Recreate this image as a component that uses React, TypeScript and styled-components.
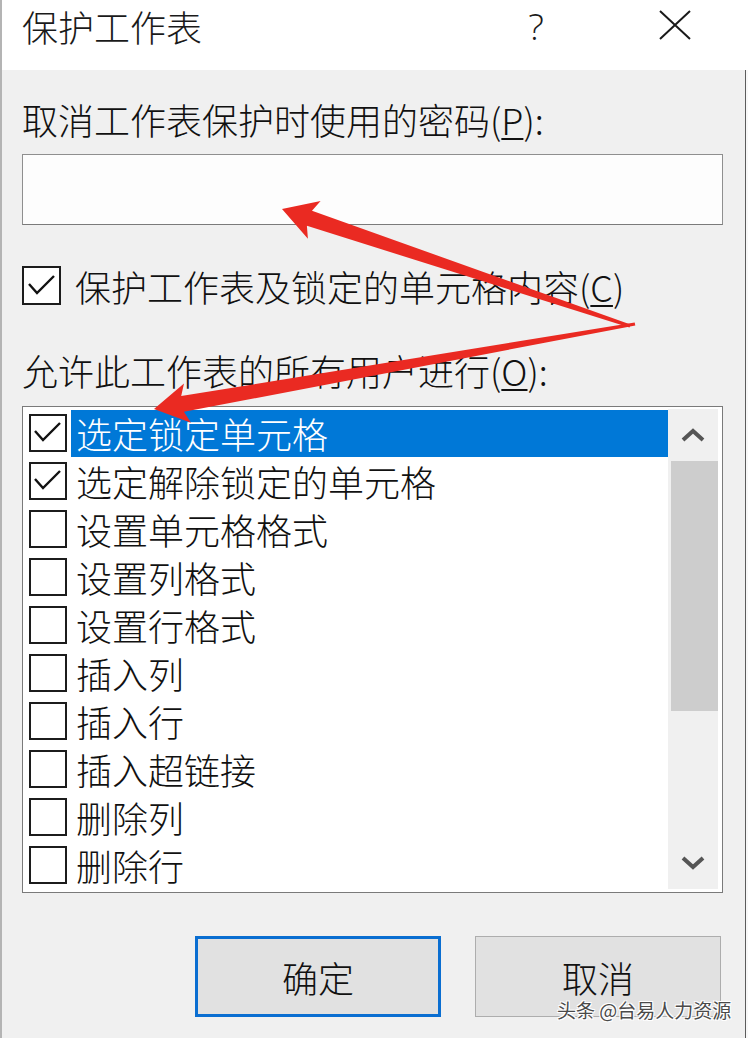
import React from "react";
import styled, { createGlobalStyle, css } from "styled-components";

const GlobalStyle = createGlobalStyle`
  html, body { margin: 0; padding: 0; background: #f0f0f0; }
  body { font-family: "Noto Sans CJK SC", "Noto Sans", sans-serif; }
  * { box-sizing: border-box; }
`;

const Page = styled.div`
  position: relative;
  width: 748px;
  height: 1038px;
  display: flex;
  flex-direction: column;
  border-left: 2px solid #b4b4b4;
  background: #f8f8f8;
  color: #111;
  font-family: "Noto Sans CJK SC", "Noto Sans", sans-serif;
  font-weight: 300;
  overflow: hidden;
`;

const TitleBar = styled.div`
  height: 70px;
  flex: none;
  display: flex;
  align-items: flex-start;
  padding: 7px 38px 0 20px;
  background: #ffffff;
`;

const Title = styled.div`
  font-size: 36px;
  line-height: 38px;
  color: #1a1a1a;
`;

const Controls = styled.div`
  margin-left: auto;
  display: flex;
  gap: 74px;
  margin-top: -3px;
`;

const HelpButton = styled.div`
  width: 60px;
  height: 40px;
  text-align: center;
  font-family: "Open Sans", "Noto Sans", sans-serif;
  font-weight: 300;
  font-size: 37px;
  line-height: 44px;
  color: #1a1a1a;
`;

const CloseButton = styled.div`
  width: 70px;
  height: 40px;
  display: flex;
  justify-content: center;
  padding-top: 6px;
`;

const Body = styled.div`
  flex: 1;
  display: flex;
  flex-direction: column;
  width: 744px;
  padding: 0 23px 0 20px;
  background: #f0f0f0;
  border-right: 1px solid #5c5c5c;
`;

const Label = styled.div<{ $top: number }>`
  margin-top: ${(p) => p.$top}px;
  font-size: 36px;
  line-height: 40px;
  white-space: nowrap;
  color: #111;
  u { text-decoration-thickness: 2px; text-underline-offset: 3px; }
`;

const PasswordInput = styled.div`
  margin-top: 15px;
  width: 701px;
  height: 71px;
  background: #fdfdfd;
  border: 1px solid #8f8f8f;
  border-bottom-color: #7a7a7a;
`;

const CheckRow = styled.div`
  margin-top: 41px;
  display: flex;
  align-items: center;
  height: 39px;
  gap: 14px;
  font-size: 36px;
  line-height: 40px;
  white-space: nowrap;
  u { text-decoration-thickness: 2px; text-underline-offset: 3px; }
`;

const Box = styled.div<{ $size: number }>`
  flex: none;
  width: ${(p) => p.$size}px;
  height: ${(p) => p.$size}px;
  border: 2px solid #1c1c1c;
  background: #ffffff;
  display: flex;
  align-items: center;
  justify-content: center;
`;

const ListBox = styled.div`
  margin-top: 16px;
  width: 701px;
  height: 487px;
  display: flex;
  background: #ffffff;
  border: 1px solid #7a7a7a;
`;

const Rows = styled.div`
  flex: 1;
  display: flex;
  flex-direction: column;
  padding: 2px 0 0 6px;
`;

const Row = styled.div`
  height: 48px;
  display: flex;
  align-items: center;
`;

const ItemText = styled.div<{ $selected?: boolean }>`
  flex: 1;
  height: 47px;
  margin-left: 4px;
  padding-left: 5px;
  font-size: 36px;
  line-height: 47px;
  white-space: nowrap;
  color: #111;
  ${(p) =>
    p.$selected &&
    css`
      background: #0078d7;
      color: #ffffff;
    `}
`;

const ScrollBar = styled.div`
  width: 50px;
  margin: 2px 4px 3px 0;
  display: flex;
  flex-direction: column;
  background: #f0f0f0;
`;

const ScrollButton = styled.div<{ $h: number }>`
  height: ${(p) => p.$h}px;
  flex: none;
  display: flex;
  align-items: center;
  justify-content: center;
`;

const Thumb = styled.div`
  height: 250px;
  margin-left: 3px;
  background: #cdcdcd;
`;

const Track = styled.div`
  flex: 1;
`;

const ButtonRow = styled.div`
  margin-top: 43px;
  display: flex;
  gap: 34px;
  padding-left: 173px;
`;

const DialogButton = styled.div<{ $primary?: boolean }>`
  width: 246px;
  height: 81px;
  display: flex;
  align-items: center;
  justify-content: center;
  background: #e1e1e1;
  font-size: 36px;
  line-height: 40px;
  color: #111;
  border: ${(p) => (p.$primary ? "3px solid #0a6ed1" : "1px solid #adadad")};
`;

const Watermark = styled.div`
  position: absolute;
  left: 555px;
  top: 998px;
  font-size: 19px;
  line-height: 24px;
  font-weight: 400;
  color: #4a4a4a;
  white-space: nowrap;
  text-shadow: 1px 1px 0 #fff, -1px -1px 0 #fff, 1px -1px 0 #fff, -1px 1px 0 #fff;
`;

const Overlay = styled.svg`
  position: absolute;
  left: 0;
  top: 0;
  pointer-events: none;
`;

type Pt = [number, number];

function arrowPoints(tip: Pt, tail: Pt, H = 34, W = 20, s0 = 8, s1 = 1.5): string {
  const dx = tail[0] - tip[0];
  const dy = tail[1] - tip[1];
  const len = Math.hypot(dx, dy);
  const u: Pt = [dx / len, dy / len];
  const p: Pt = [-u[1], u[0]];
  const at = (a: number, b: number): Pt => [tip[0] + u[0] * a + p[0] * b, tip[1] + u[1] * a + p[1] * b];
  const pts: Pt[] = [
    tip,
    at(H, W),
    at(H - 5, s0),
    at(len, s1),
    at(len, -s1),
    at(H - 5, -s0),
    at(H, -W),
  ];
  return pts.map((q) => `${q[0].toFixed(1)},${q[1].toFixed(1)}`).join(" ");
}

const Check = () => (
  <svg width="30" height="24" viewBox="0 0 30 24">
    <path d="M2 10 L10 19 L27 2" fill="none" stroke="#111" strokeWidth="2.4" />
  </svg>
);

const ChevronUp = () => (
  <svg width="24" height="14" viewBox="0 0 24 14">
    <path d="M2 12 L12 3 L22 12" fill="none" stroke="#555" strokeWidth="4" />
  </svg>
);

const ChevronDown = () => (
  <svg width="24" height="14" viewBox="0 0 24 14">
    <path d="M2 2 L12 11 L22 2" fill="none" stroke="#555" strokeWidth="4" />
  </svg>
);

const items: { text: string; checked: boolean }[] = [
  { text: "选定锁定单元格", checked: true },
  { text: "选定解除锁定的单元格", checked: true },
  { text: "设置单元格格式", checked: false },
  { text: "设置列格式", checked: false },
  { text: "设置行格式", checked: false },
  { text: "插入列", checked: false },
  { text: "插入行", checked: false },
  { text: "插入超链接", checked: false },
  { text: "删除列", checked: false },
  { text: "删除行", checked: false },
];

export default function App() {
  return (
    <>
      <GlobalStyle />
      <Page>
        <TitleBar>
          <Title>保护工作表</Title>
          <Controls>
            <HelpButton>?</HelpButton>
            <CloseButton>
              <svg width="32" height="30" viewBox="0 0 32 30">
                <path d="M1 1 L31 29 M31 1 L1 29" stroke="#1a1a1a" strokeWidth="2" fill="none" />
              </svg>
            </CloseButton>
          </Controls>
        </TitleBar>
        <Body>
          <Label $top={29}>
            取消工作表保护时使用的密码(<u>P</u>):
          </Label>
          <PasswordInput />
          <CheckRow>
            <Box $size={39}>
              <Check />
            </Box>
            <span>
              保护工作表及锁定的单元格内容(<u>C</u>)
            </span>
          </CheckRow>
          <Label $top={45}>
            允许此工作表的所有用户进行(<u>O</u>):
          </Label>
          <ListBox>
            <Rows>
              {items.map((it, i) => (
                <Row key={it.text}>
                  <Box $size={38}>{it.checked && <Check />}</Box>
                  <ItemText $selected={i === 0}>{it.text}</ItemText>
                </Row>
              ))}
            </Rows>
            <ScrollBar>
              <ScrollButton $h={52}>
                <ChevronUp />
              </ScrollButton>
              <Thumb />
              <Track />
              <ScrollButton $h={52}>
                <ChevronDown />
              </ScrollButton>
            </ScrollBar>
          </ListBox>
          <ButtonRow>
            <DialogButton $primary>确定</DialogButton>
            <DialogButton>取消</DialogButton>
          </ButtonRow>
        </Body>
        <Overlay width="748" height="1038" viewBox="0 0 748 1038">
          <g fill="#ea2a22">
            <polygon points={arrowPoints([280, 209], [628, 326])} />
            <polygon points={arrowPoints([152, 409], [633, 324])} />
          </g>
        </Overlay>
        <Watermark>头条 @台易人力资源</Watermark>
      </Page>
    </>
  );
}
